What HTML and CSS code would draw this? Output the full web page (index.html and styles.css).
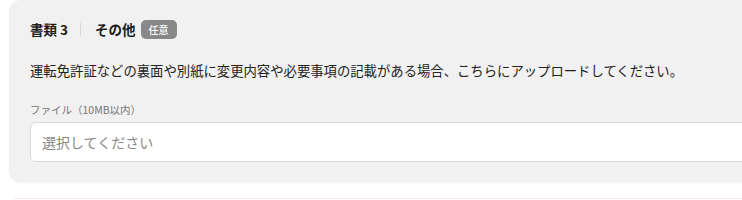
FILE: index.html
```html
<!DOCTYPE html>
<html lang="ja">
<head>
    <meta charset="UTF-8">
    <meta name="viewport" content="width=device-width, initial-scale=1.0">
    <title>書類アップロード</title>
    <link rel="stylesheet" href="styles.css">
</head>
<body>
    <div class="doc-card">
        <div class="doc-title">
            <span class="doc-num">書類 3</span>
            <span class="doc-sep"></span>
            <span class="doc-name">その他</span>
            <span class="badge">任意</span>
        </div>

        <p class="doc-desc">運転免許証などの裏面や別紙に変更内容や必要事項の記載がある場合、こちらにアップロードしてください。</p>

        <div class="form-group">
            <label for="file_other">ファイル（10MB以内）</label>
            <div class="file-select" id="file_other">選択してください</div>
        </div>
    </div>

    <div class="next-card"></div>
</body>
</html>
```

FILE: styles.css
```css
* {
    margin: 0;
    padding: 0;
    box-sizing: border-box;
}

html, body {
    height: 200px;
    overflow: hidden;
}

body {
    font-family: 'Noto Sans CJK JP', 'Noto Sans', sans-serif;
    background: #fff;
    color: #222;
    width: 742px;
}

.doc-card {
    width: 800px;
    margin-left: 9px;
    background: #f1f1f1;
    border-radius: 12px;
    padding: 19px 20px 20px 21px;
    box-shadow: 0 1px 3px rgba(0,0,0,0.05);
}

.doc-title {
    display: flex;
    align-items: center;
    height: 20px;
    font-size: 13.5px;
    font-weight: 700;
    color: #1c1c1c;
}

.doc-sep {
    width: 1px;
    height: 13px;
    background: #d6d6d6;
    margin: 0 14px 0 12px;
}

.badge {
    margin-left: 5px;
    background: #888;
    color: #fff;
    font-size: 10px;
    font-weight: 500;
    border-radius: 5px;
    padding: 0 8px;
    height: 19px;
    line-height: 19px;
}

.doc-desc {
    margin-top: 22px;
    font-size: 13.35px;
    line-height: 20px;
    color: #222;
}

.form-group {
    margin-top: 22px;
}

.form-group label {
    display: block;
    font-size: 10.5px;
    line-height: 14px;
    color: #777;
    margin-bottom: 5px;
}

.file-select {
    height: 40px;
    background: #fff;
    border: 1px solid #d9d9d9;
    border-radius: 6px;
    padding: 0 11px;
    line-height: 38px;
    font-size: 14px;
    color: #888;
}

.next-card {
    margin: 16px 0 0 14px;
    height: 20px;
    border-top: 1px solid #fde9ea;
    background: #fffcfc;
}
```
